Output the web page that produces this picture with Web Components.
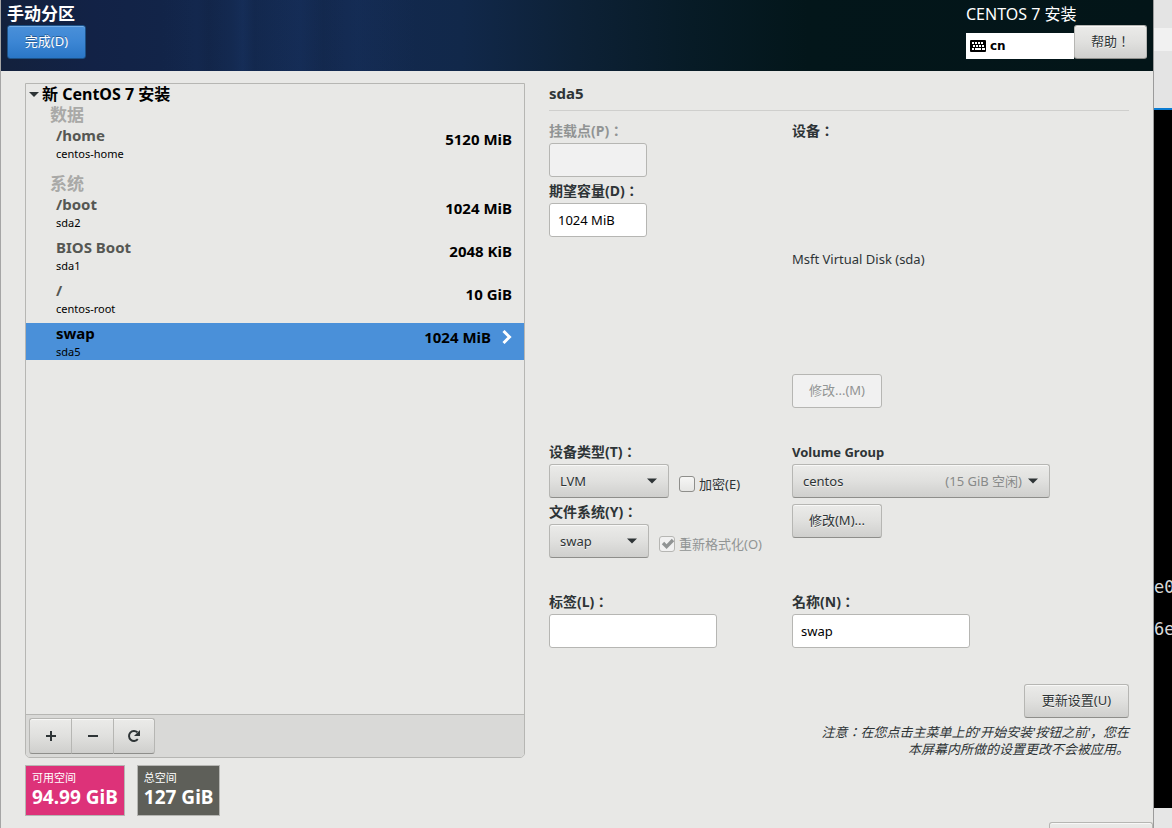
<!DOCTYPE html>
<html lang="zh-CN">
<head>
<meta charset="utf-8">
<meta name="viewport" content="width=device-width, initial-scale=1">
<title>手动分区</title>
<style>
  :root {
    --bg: #e8e8e6;
    --ink: #2e3436;
    --muted: #919494;
    --line: #b6b6b3;
    --accent: #4a90d9;
    --face: linear-gradient(#ebebe9, #e0e0de 50%, #cfcfcd);
    --ui: "Noto Sans", "Noto Sans CJK SC", sans-serif;
    --label: "Noto Sans", "Noto Sans CJK TC", sans-serif;
  }
  body { margin: 0; background: var(--bg); color: var(--ink); font: 13px/18px var(--ui); }
</style>
</head>
<body>
<install-desktop>
  <install-header slot="window" heading="手动分区" product="CENTOS 7 安装" layout="cn"></install-header>
  <partition-page slot="window">
    <partition-list slot="list" heading="新 CentOS 7 安装">
      <partition-group heading="数据">
        <partition-item name="/home" device="centos-home" size="5120 MiB"></partition-item>
      </partition-group>
      <partition-group heading="系统">
        <partition-item name="/boot" device="sda2" size="1024 MiB"></partition-item>
        <partition-item name="BIOS Boot" device="sda1" size="2048 KiB"></partition-item>
        <partition-item name="/" device="centos-root" size="10 GiB"></partition-item>
        <partition-item name="swap" device="sda5" size="1024 MiB" selected></partition-item>
      </partition-group>
    </partition-list>
    <space-tile slot="space" label="可用空间" value="94.99 GiB" style="--tile:#dd3279"></space-tile>
    <space-tile slot="space" label="总空间" value="127 GiB" style="--tile:#5e5f59"></space-tile>
    <partition-details slot="details"></partition-details>
  </partition-page>
</install-desktop>

<script>
const define = (name, render) => customElements.define(name, class extends HTMLElement {
  constructor() {
    super();
    this.attachShadow({ mode: "open" });
  }
  connectedCallback() {
    this.shadowRoot.innerHTML = "<style>:host,*{box-sizing:border-box}</style>" + render(this, n => this.getAttribute(n) || "");
  }
});

define("push-button", (el, at) => `
  <style>
    :host { display: inline-block; }
    button { width: 100%; height: 34px; padding: 0 14px 2px; border: 1px solid var(--line); border-bottom-color: #8e8e8b;
      border-radius: 3px; background: var(--face); box-shadow: inset 0 1px #f8f8f7; color: var(--ink);
      font: 13px/18px var(--label); font-feature-settings: "locl" 0; text-shadow: 0 1px #f4f4f2; white-space: nowrap; }
    :host([primary]) button { border-color: #1c5187; background: linear-gradient(#4a90d9, #3c86d4 50%, #2a76c6);
      box-shadow: inset 0 1px #76aee6; color: #fff; text-shadow: 0 -1px #2a5c92; }
    button:disabled { background: #f1f1f1; border-color: var(--line); box-shadow: none; color: var(--muted); }
  </style>
  <button type="button" ${el.hasAttribute("disabled") ? "disabled" : ""}><slot></slot></button>`);

define("text-field", (el, at) => `
  <style>
    :host { display: block; }
    label { display: block; font: bold 14px/24px var(--label); font-feature-settings: "locl" 0; white-space: nowrap; }
    input { display: block; width: 100%; height: 34px; padding: 0 8px; border: 1px solid var(--line);
      border-radius: 3px; background: #fff; color: #000; font: 13px/18px var(--ui); }
    :host([disabled]) label { color: var(--muted); }
    input:disabled { background: #f1f1f1; }
  </style>
  <label for="f">${at("label")}</label>
  <input id="f" type="text" value="${at("value")}" ${el.hasAttribute("disabled") ? "disabled" : ""}>`);

define("drop-down", (el, at) => `
  <style>
    :host { display: block; }
    label { display: block; font: bold 14px/24px var(--label); font-feature-settings: "locl" 0; white-space: nowrap; }
    label:lang(en) { font-size: 13px; }
    .box { display: grid; align-items: center; }
    .box > * { grid-area: 1 / 1; }
    select { appearance: none; width: 100%; height: 34px; padding: 0 10px; border: 1px solid var(--line);
      border-bottom-color: #8e8e8b; border-radius: 3px; background: var(--face); box-shadow: inset 0 1px #f8f8f7;
      color: var(--ink); font: 13px/18px var(--ui); text-shadow: 0 1px #f4f4f2; }
    .end { display: flex; align-items: center; justify-content: flex-end; gap: 6px; padding-right: 12px;
      color: #888a89; pointer-events: none; }
    svg { display: block; }
  </style>
  <label for="s" lang="${at("label-lang") || "zh-CN"}">${at("label")}</label>
  <div class="box">
    <select id="s"><option>${at("value")}</option></select>
    <div class="end"><slot></slot><svg width="10" height="6" viewBox="0 0 10 6"><path d="M0 .5h10L5 5.5z" fill="#2e3436"/></svg></div>
  </div>`);

define("check-option", (el, at) => `
  <style>
    :host { display: block; }
    label { display: flex; align-items: center; gap: 4px; font: 13px/18px var(--ui); white-space: nowrap; }
    :host([disabled]) label { color: var(--muted); }
    input { appearance: none; flex: none; width: 16px; height: 16px; margin: 0; border: 1px solid #8e8e8b;
      border-radius: 3px; background: linear-gradient(#f6f6f5, #e6e6e4); }
    input:disabled { border-color: var(--line); background: #f1f1f1; }
    .box { display: grid; }
    .box > * { grid-area: 1 / 1; }
    svg { pointer-events: none; }
  </style>
  <label><span class="box"><input type="checkbox" ${el.hasAttribute("checked") ? "checked" : ""} ${el.hasAttribute("disabled") ? "disabled" : ""}>
    ${el.hasAttribute("checked") ? '<svg width="16" height="16" viewBox="0 0 16 16"><path d="M4 7l3.6 3.6L14 4" fill="none" stroke="#919494" stroke-width="3.4"/></svg>' : ""}</span>
    <span><slot></slot></span></label>`);

define("install-header", (el, at) => `
  <style>
    :host { display: flex; justify-content: space-between; height: 71px; padding: 4px 6px 0; color: #fff;
      background:
        linear-gradient(90deg, transparent 14%, #1d3f7a18 17%, transparent 18%, #1d3f7a22 20%, #1d3f7a44 21%, #1d3f7a10 22%, #1d3f7a33 26%, transparent 28%, #1d3f7a22 31%, transparent 36%),
        linear-gradient(90deg, #13213d, #122246 8%, #12264a 20%, #13294f 30%, #11284a 40%, #0d2136 50%, #071b26 60%, #03161a 70%, #031518); }
    h1 { margin: 0 0 1px; font: bold 17px/20px var(--ui); }
    push-button[primary] { display: block; width: 79px; }
    .end { display: grid; grid-template-columns: 108px 73px; align-items: end; align-content: start; }
    .product { grid-column: 1 / -1; margin-bottom: 1px; font: 16px/20px var(--ui); }
    .layout { display: flex; align-items: center; gap: 4px; height: 26px; padding: 0 4px; border: 0; background: #fff;
      color: #000; font: bold 12px/18px "DejaVu Sans", sans-serif; }
  </style>
  <div><h1>${at("heading")}</h1><push-button primary>完成(D)</push-button></div>
  <div class="end">
    <div class="product">${at("product")}</div>
    <button class="layout" type="button"><svg width="16" height="12" viewBox="0 0 16 12"><rect width="16" height="12" rx="1"/>
      <path fill="#fff" d="M2 2h2v2H2zM5 2h2v2H5zM8 2h2v2H8zM11 2h2v2h-2zM3 5h2v2H3zM6 5h2v2H6zM9 5h2v2H9zM12 5h2v2h-2zM2 8h2v2H2zM5 8h6v2H5zM12 8h3v2h-3z"/></svg>${at("layout")}</button>
    <push-button>帮助！</push-button>
  </div>`);

define("partition-item", (el, at) => `
  <style>
    :host { display: flex; justify-content: space-between; height: 37px; margin-bottom: 6px; padding: 0 12px 0 30px; color: #000; }
    :host([selected]) { background: var(--accent); }
    .name { font: bold 15px/20px var(--ui); color: #555753; }
    :host([selected]) .name { color: #000; }
    .device { font: 11px/17px var(--ui); }
    .size { display: flex; align-items: center; gap: 11px; height: 20px; margin-top: 4px; font: bold 15px/20px var(--ui); }
  </style>
  <div><div class="name">${at("name")}</div><div class="device">${at("device")}</div></div>
  <div class="size">${at("size")}${el.hasAttribute("selected") ? '<svg width="10" height="14" viewBox="0 0 10 14"><path d="M1.5 1l6 6-6 6" fill="none" stroke="#fff" stroke-width="3"/></svg>' : ""}</div>`);

define("partition-group", (el, at) => `
  <style>
    :host { display: block; padding-bottom: 6px; }
    h3 { margin: 0; padding-left: 24px; font: bold 17px/20px var(--ui); color: #a9a9a7; }
  </style>
  <h3>${at("heading")}</h3><slot></slot>`);

define("partition-list", (el, at) => `
  <style>
    :host { display: flex; flex-direction: column; border: 1px solid var(--line); border-radius: 0 0 5px 5px; overflow: hidden; }
    .items { flex: 1; }
    h2 { display: flex; align-items: center; gap: 3px; margin: 0; padding-left: 3px; font: bold 16px/21px var(--ui); color: #000; }
    .bar { display: flex; padding: 3px; border-top: 1px solid var(--line); background: #d9d9d7; }
    .bar button { display: grid; place-items: center; width: 42px; height: 36px; padding: 0; border: 1px solid var(--line);
      border-right-width: 0; border-bottom-color: #8e8e8b; background: var(--face); box-shadow: inset 0 1px #f8f8f7; }
    .bar button:first-child { border-radius: 3px 0 0 3px; }
    .bar button:last-child { border-right-width: 1px; border-radius: 0 3px 3px 0; }
    path.s { fill: none; stroke: var(--ink); stroke-width: 2; }
  </style>
  <div class="items">
    <h2><svg width="10" height="5" viewBox="0 0 10 5"><path d="M0 0h10L5 5z" fill="#2e3436"/></svg>${at("heading")}</h2>
    <slot></slot>
  </div>
  <div class="bar">
    <button type="button" aria-label="添加"><svg width="16" height="16" viewBox="0 0 16 16"><path class="s" d="M3 8h10M8 3v10"/></svg></button>
    <button type="button" aria-label="删除"><svg width="16" height="16" viewBox="0 0 16 16"><path class="s" d="M3 8h10"/></svg></button>
    <button type="button" aria-label="重新载入"><svg width="16" height="16" viewBox="0 0 16 16"><path class="s" d="M11.8 11.2A5 5 0 1 1 11.4 4.2"/><path d="M14 2v6H8z" fill="#2e3436"/></svg></button>
  </div>`);

define("space-tile", (el, at) => `
  <style>
    :host { display: block; padding: 4px 6px 6px; border: 1px solid var(--line); background: var(--tile); color: #fff; white-space: nowrap; }
    .label { font: 11px/16px var(--ui); }
    .value { font: bold 19px/23px var(--ui); }
  </style>
  <div class="label">${at("label")}</div><div class="value">${at("value")}</div>`);

define("partition-details", () => `
  <style>
    :host { display: block; }
    h2 { margin: 0 0 8px; padding-bottom: 6px; border-bottom: 1px solid #cfcfcd; font: bold 15px/21px var(--ui); }
    .grid { display: grid; grid-template-columns: 243fr 337fr; row-gap: 32px; }
    .grid > div { display: flex; flex-direction: column; align-items: flex-start; gap: 2px; }
    h3 { margin: 0; font: bold 14px/24px var(--label); font-feature-settings: "locl" 0; }
    .row { display: flex; align-items: flex-end; gap: 10px; }
    .row check-option { margin-bottom: 5px; }
    .device { display: flex; align-items: center; height: 227px; }
    .short { width: 98px; } .type { width: 120px; } .fs { width: 100px; }
    .tag { width: 168px; } .name { width: 178px; } .group { width: 258px; }
    .edit { width: 90px; }
    .group + .edit { margin-top: 4px; }
    .end { display: flex; flex-direction: column; align-items: flex-end; margin-top: 36px; }
    .update { width: 105px; }
    p { margin: 6px 0 0; font: italic 13px/17px var(--ui); text-align: right; }
    .colon { font-family: var(--label); font-feature-settings: "locl" 0; }
  </style>
  <h2>sda5</h2>
  <div class="grid">
    <div>
      <text-field class="short" label="挂载点(P)：" disabled></text-field>
      <text-field class="short" label="期望容量(D)：" value="1024 MiB"></text-field>
    </div>
    <div>
      <h3>设备：</h3>
      <div class="device">Msft Virtual Disk (sda)</div>
      <push-button class="edit" disabled>修改...(M)</push-button>
    </div>
    <div>
      <div class="row"><drop-down class="type" label="设备类型(T)：" value="LVM"></drop-down><check-option>加密(E)</check-option></div>
      <div class="row"><drop-down class="fs" label="文件系统(Y)：" value="swap"></drop-down><check-option checked disabled>重新格式化(O)</check-option></div>
    </div>
    <div>
      <drop-down class="group" label="Volume Group" label-lang="en" value="centos">(15 GiB 空闲)</drop-down>
      <push-button class="edit">修改(M)...</push-button>
    </div>
    <div><text-field class="tag" label="标签(L)："></text-field></div>
    <div><text-field class="name" label="名称(N)：" value="swap"></text-field></div>
  </div>
  <div class="end">
    <push-button class="update">更新设置(U)</push-button>
    <p>注意<span class="colon">：</span>在您点击主菜单上的'开始安装'按钮之前'，您在<br>本屏幕内所做的设置更改不会被应用。</p>
  </div>`);

define("partition-page", () => `
  <style>
    :host { display: grid; grid-template-columns: 500fr 580fr; grid-template-rows: 1fr auto; column-gap: 24px; row-gap: 7px;
      flex: 1; padding: 12px 24px 6px; }
    .list { display: grid; }
    .space { display: flex; gap: 12px; }
  </style>
  <div class="list"><slot name="list"></slot></div>
  <slot name="details"></slot>
  <div class="space"><slot name="space"></slot></div>`);

define("install-desktop", () => `
  <style>
    :host { display: grid; grid-template-columns: minmax(0, 1fr) 19px; height: 100vh; min-height: 820px; overflow: hidden; }
    main { display: flex; flex-direction: column; border-left: 1px solid #a5a5a5; background: var(--bg); }
    footer { display: flex; justify-content: flex-end; height: 6px; overflow: hidden; }
    footer push-button { width: 104px; }
    aside { display: flex; flex-direction: column; border-left: 1px solid #9b9b9b; background: #e4e4e4; overflow: hidden; }
    .light { height: 28px; } .pale { height: 23px; background: #f1f1f1; } .tail { height: 57px; }
    .console { flex: 1; margin-left: -1px; padding-top: 467px; border-top: 2px solid #0a7bd2; border-left: 1px solid #2a2a2a;
      background: #000; color: #d8d8d8; font: 17px/21px "DejaVu Sans Mono", monospace; white-space: nowrap; }
    .console div { margin-bottom: 21px; }
    .foot { height: 20px; background: #e6e6e6; }
  </style>
  <main><slot name="window"></slot><footer><push-button aria-hidden="true"></push-button></footer></main>
  <aside><div class="light"></div><div class="pale"></div><div class="tail"></div>
    <div class="console"><div>e0</div><div>6e</div></div><div class="foot"></div></aside>`);
</script>
</body>
</html>
